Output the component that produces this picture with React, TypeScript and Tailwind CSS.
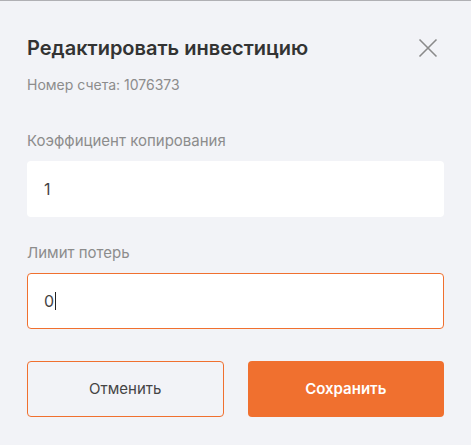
import React from "react";

export default function App() {
  return (
    <div
      className="w-[471px] h-[445px] bg-[#f2f3f7] border-t border-[#b0b0b4] overflow-hidden"
      style={{ fontFamily: "Inter, 'Noto Sans', sans-serif" }}
    >
      <div className="px-[27px] pt-[33px]">
        <div className="flex items-start justify-between">
          <h1 className="text-[20px] leading-[28px] font-semibold text-[#333333]">
            Редактировать инвестицию
          </h1>
          <button className="mt-[4px] mr-[6px] w-[20px] h-[20px] flex items-center justify-center">
            <svg width="20" height="20" viewBox="0 0 20 20" fill="none">
              <path d="M1.5 1.5L18.5 18.5M18.5 1.5L1.5 18.5" stroke="#8a8a8a" strokeWidth="1.6" />
            </svg>
          </button>
        </div>
        <div className="mt-[13px] text-[14px] leading-[20px] text-[#8c8c8c]">
          Номер счета: 1076373
        </div>

        <div className="mt-[36px] text-[15px] leading-[20px] text-[#8c8c8c]">
          Коэффициент копирования
        </div>
        <div className="mt-[10px] h-[56px] bg-white rounded-[4px] flex items-center px-[17px] text-[16px] text-[#444]">
          1
        </div>

        <div className="mt-[26px] text-[15px] leading-[20px] text-[#8c8c8c]">
          Лимит потерь
        </div>
        <div className="mt-[10px] h-[56px] bg-white rounded-[4px] border border-[#f0702f] flex items-center px-[16px] text-[16px] text-[#444]">
          0<span className="inline-block w-[1px] h-[18px] bg-[#222] ml-[1px]" />
        </div>

        <div className="mt-[32px] grid grid-cols-2 gap-[24px]">
          <button className="h-[56px] rounded-[4px] border border-[#f0702f] text-[15px] text-[#444]">
            Отменить
          </button>
          <button className="h-[56px] rounded-[4px] bg-[#f0702f] text-[15px] font-semibold text-white">
            Сохранить
          </button>
        </div>
      </div>
    </div>
  );
}
